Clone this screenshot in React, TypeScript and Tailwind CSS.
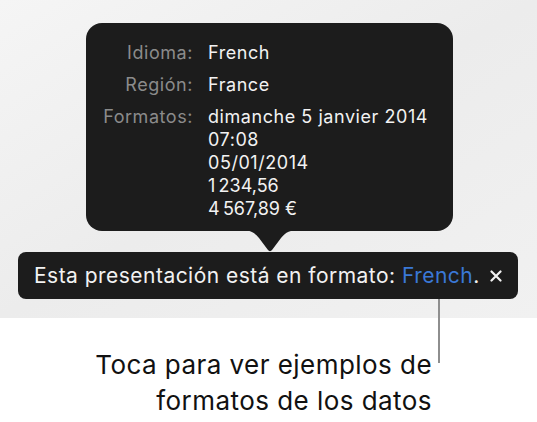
import React from "react";

const rows: { label: string; values: string[] }[] = [
  { label: "Idioma:", values: ["French"] },
  { label: "Región:", values: ["France"] },
  {
    label: "Formatos:",
    values: ["dimanche 5 janvier 2014", "07:08", "05/01/2014", "1\u202F234,56", "4\u202F567,89 €"],
  },
];

function Tail() {
  return (
    <svg
      className="absolute left-[240px] top-[230px]"
      width="60"
      height="23"
      viewBox="0 0 60 23"
    >
      <path d="M0 0 C10 0 14 2 19 8 L28 20 C29 21.5 31 21.5 32 20 L41 8 C46 2 50 0 60 0 Z" fill="#1c1c1c" />
    </svg>
  );
}

function CloseIcon() {
  return (
    <svg width="12" height="12" viewBox="0 0 12 12" className="shrink-0">
      <path d="M1.5 1.5 L10.5 10.5 M10.5 1.5 L1.5 10.5" stroke="#f2f2f2" strokeWidth="2.2" strokeLinecap="round" />
    </svg>
  );
}

export default function App() {
  return (
    <div className="relative h-[422px] w-[537px] overflow-hidden bg-white font-['Inter',sans-serif]">
      <div className="flex h-[318px] w-full flex-col items-start bg-gradient-to-br from-[#f5f5f5] via-[#ececec] to-[#f1f1f1]">
        <div className="ml-[86px] mt-[23px] h-[208px] w-[367px] rounded-[16px] bg-[#1c1c1c] pt-[18px]">
          <div className="grid grid-cols-[107px_1fr] gap-x-[15px] gap-y-[9px] text-[18px] leading-[23px] tracking-[0.55px]">
            {rows.map((row) => (
              <React.Fragment key={row.label}>
                <span className="text-right text-[#8b8b8b]">{row.label}</span>
                <div className="flex flex-col text-[#f2f2f2]">
                  {row.values.map((v) => (
                    <span key={v}>{v}</span>
                  ))}
                </div>
              </React.Fragment>
            ))}
          </div>
        </div>
        <div className="ml-[18px] mt-[21px] flex h-[47px] w-[500px] items-center rounded-[8px] bg-[#1c1c1c] pl-[16px] pr-[16px] text-[21px] leading-[47px] tracking-[0.47px] text-[#f2f2f2]">
          <span className="whitespace-nowrap">
            Esta presentación está en formato: <span className="text-[#3a78d6]">French</span>.
          </span>
          <span className="ml-auto flex items-center">
            <CloseIcon />
          </span>
        </div>
      </div>
      <Tail />
      <div className="absolute left-[438px] top-[299px] h-[64px] w-[2px] bg-[#8e8e8e]" />
      <div className="mt-[29px] flex w-[432px] flex-col items-end text-[26px] leading-[36px] tracking-[0.45px] text-[#111111]">
        <span>Toca para ver ejemplos de</span>
        <span>formatos de los datos</span>
      </div>
    </div>
  );
}
